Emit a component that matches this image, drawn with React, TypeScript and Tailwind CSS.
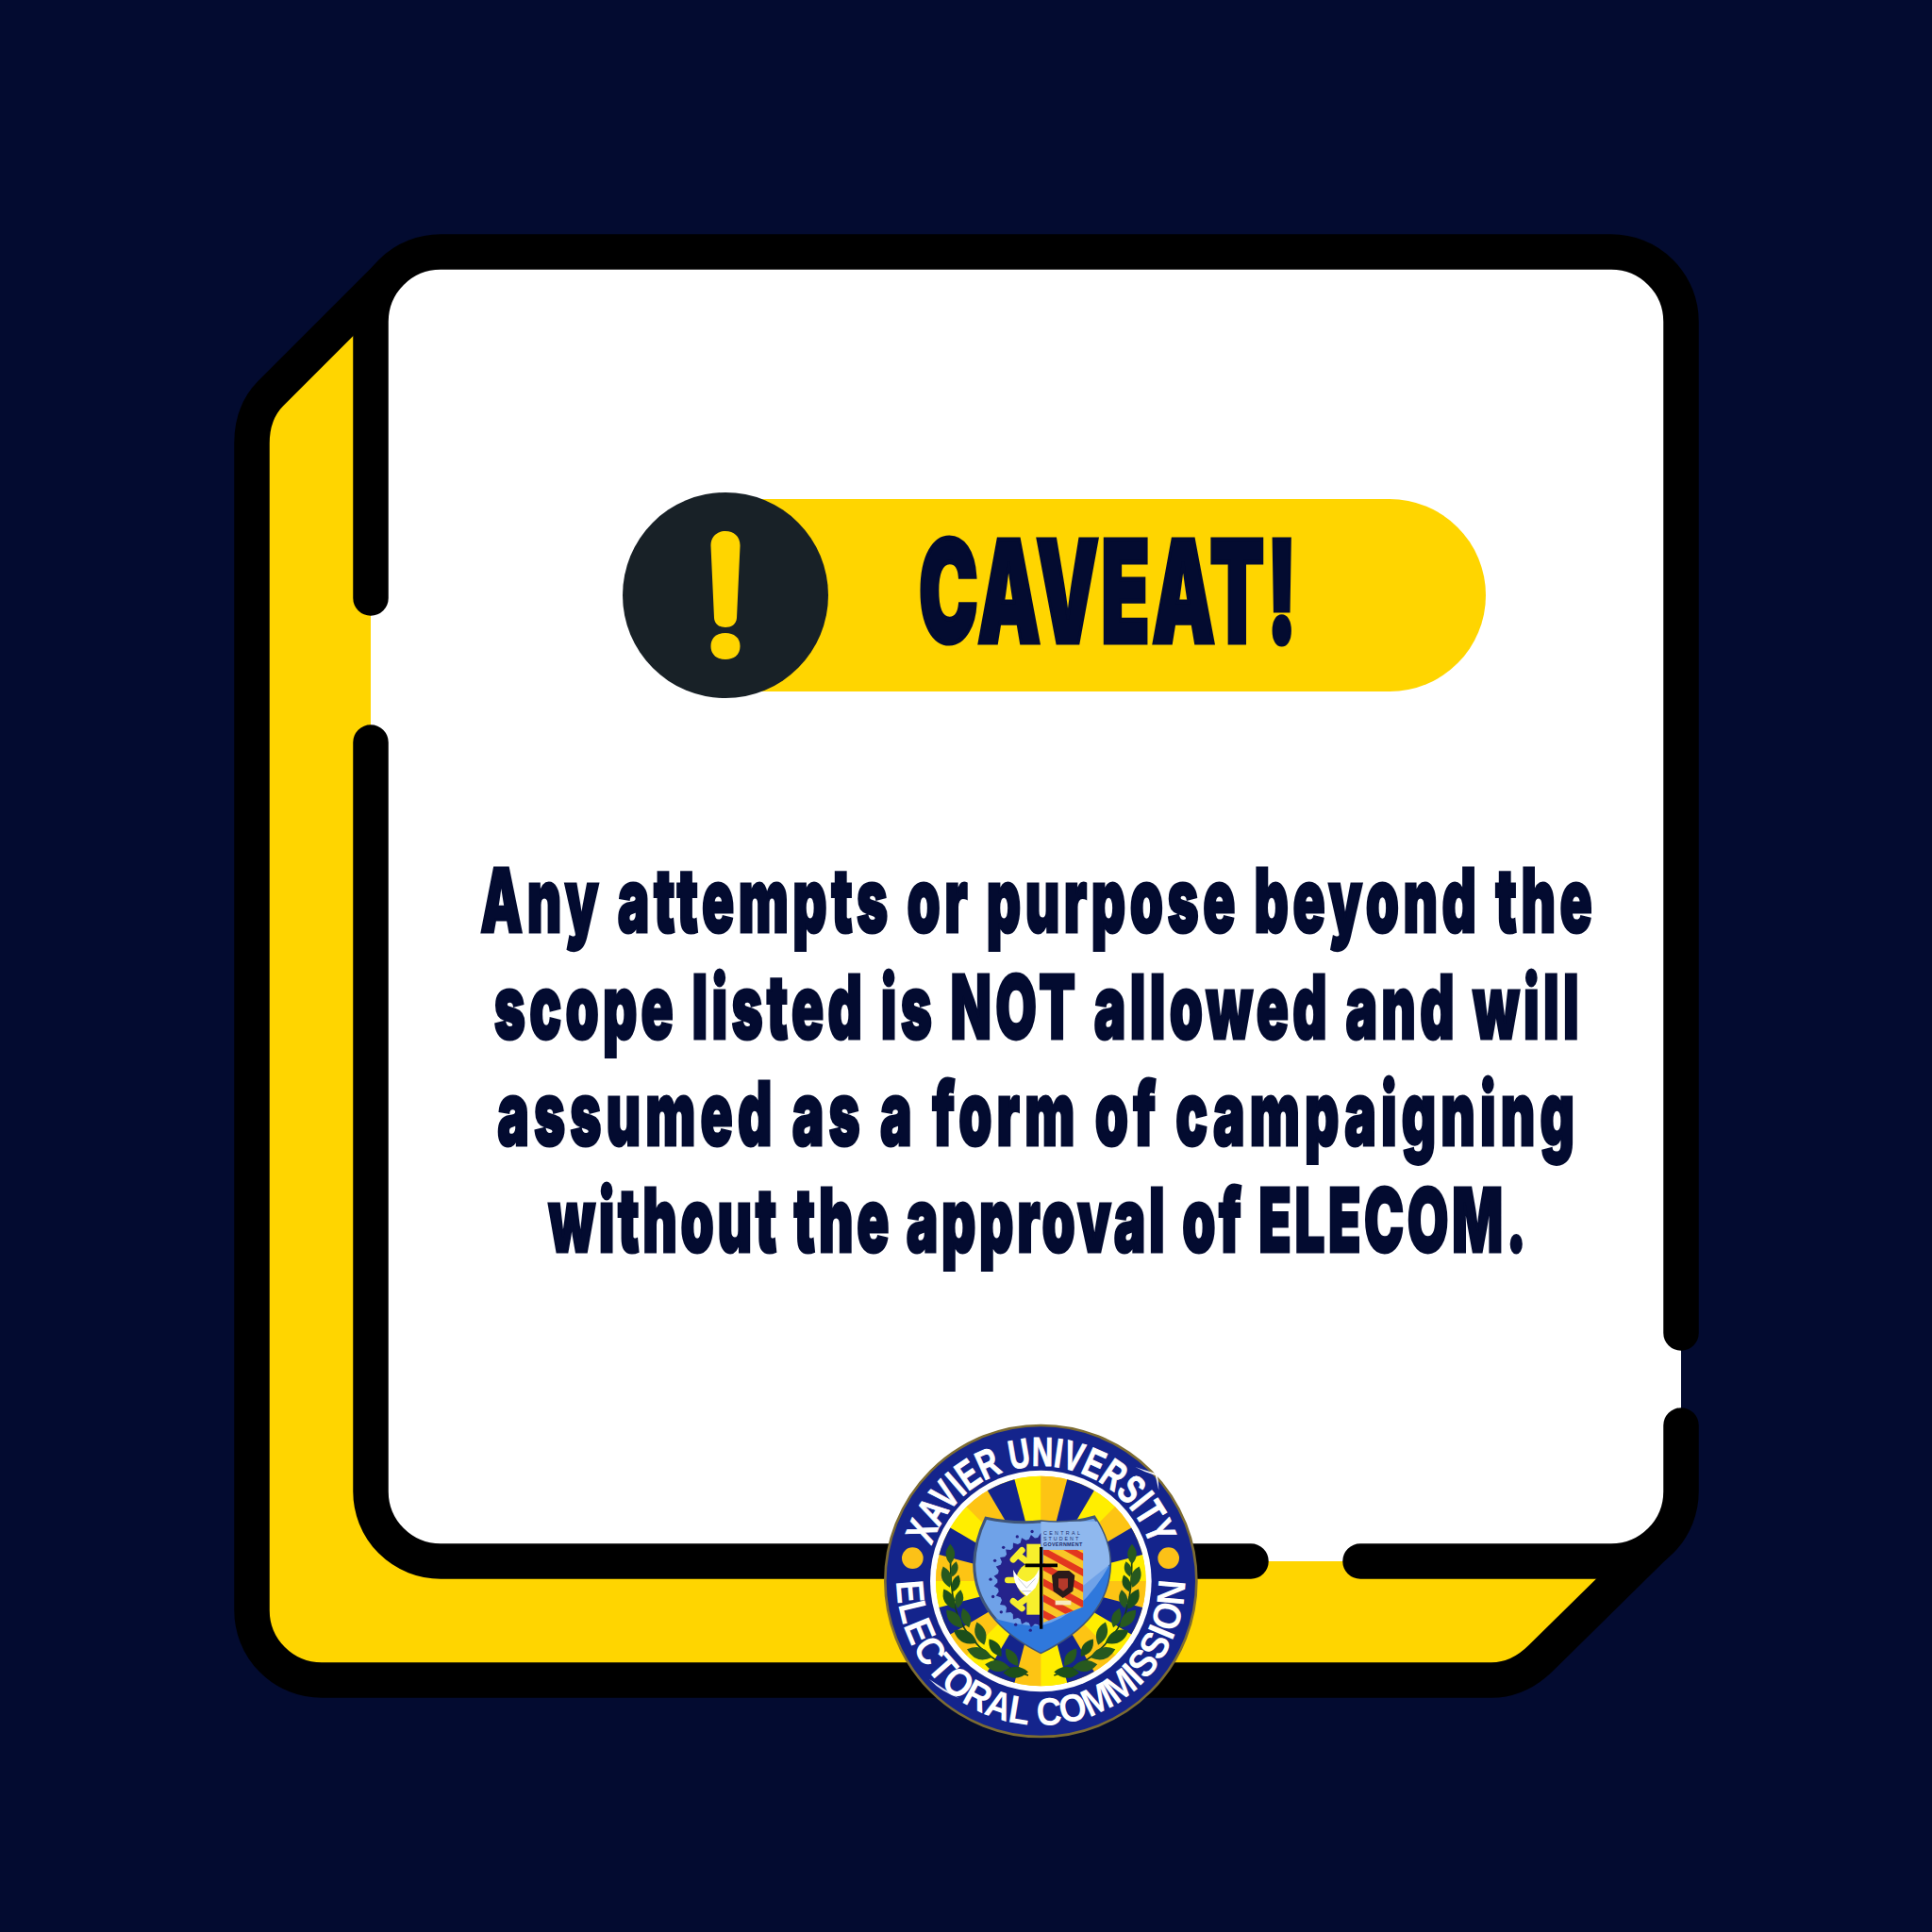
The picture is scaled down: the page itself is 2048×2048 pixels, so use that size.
const YELLOW = '#ffd500'
const SHIELD = 'M375 358Q470 378 550 368Q640 378 720 354Q770 430 770 505Q765 680 550 785Q340 680 338 505Q340 430 375 358Z'

function polar(r: number, deg: number) {
  const a = ((deg - 90) * Math.PI) / 180
  return [550 + r * Math.cos(a), 558 + r * Math.sin(a)]
}

function wedge(r: number, from: number, to: number) {
  const [x1, y1] = polar(r, from)
  const [x2, y2] = polar(r, to)
  return `M550 558L${x1} ${y1}A${r} ${r} 0 0 1 ${x2} ${y2}Z`
}

// left half of the gear, teeth every 12deg
function gear() {
  let d = 'M550 405'
  for (let a = -4; a >= -176; a -= 4) {
    const r = Math.round(a / 4) % 3 === 0 ? 150 : 138
    const [x, y] = polar(r, a)
    d += `L${x} ${y}`
  }
  return d + 'L550 705Z'
}

// [x, y, half length, rotation]
const leaves: number[][] = [
  [470, 848, 40, -2], [412, 828, 40, 8], [355, 788, 42, 18], [310, 735, 42, 28], [275, 678, 38, 48],
  [458, 800, 34, 55], [405, 770, 34, 55], [358, 725, 38, 72], [312, 675, 32, 72],
  [258, 615, 36, 62], [290, 615, 30, 100], [250, 545, 35, 72], [280, 565, 28, 108],
  [275, 520, 25, 105], [262, 472, 32, 90],
]

function Laurel({ flip }: { flip?: boolean }) {
  return (
    <g transform={flip ? 'translate(1102 0) scale(-1 1)' : undefined}>
      <path d="M510 858Q360 810 290 680Q255 590 265 450" fill="none" stroke="#173f14" strokeWidth="5" />
      {leaves.map(([x, y, l, r], i) => (
        <path
          key={i}
          d={`M${-l} 0Q0 ${-l * 0.9} ${l} 0Q0 ${l * 0.9} ${-l} 0Z`}
          transform={`translate(${x} ${y}) rotate(${r})`}
          fill={i % 3 === 0 ? '#1c4f1a' : '#27591f'}
        />
      ))}
    </g>
  )
}

function Seal() {
  const rays = [22.5, 67.5, 112.5, 157.5, 202.5, 247.5, 292.5, 337.5]
  const halves = [-22.5, 22.5, 67.5, 112.5, 157.5, 202.5, 247.5, 292.5]
  const gearDots = [-168, -150, -128, -108, -88, -66, -48, -28, -10]
  return (
    <svg viewBox="0 0 1080 1080" className="w-[360px] h-[360px]">
      <defs>
        <path id="seal-top" d={`M${polar(366, -72).join(' ')}A366 366 0 0 1 ${polar(366, 72).join(' ')}`} />
        <path id="seal-bottom" d={`M${polar(459, -90).join(' ')}A459 459 0 0 0 ${polar(459, 90).join(' ')}`} />
        <clipPath id="seal-panel">
          <path d="M558 458H685V640L558 690Z" />
        </clipPath>
        <clipPath id="seal-shield">
          <path d={SHIELD} />
        </clipPath>
      </defs>
      <circle cx="550" cy="558" r="495" fill="#14248c" stroke="#7d6c32" strokeWidth="8" />
      <circle cx="550" cy="558" r="352" fill="#ffffff" />
      <circle cx="550" cy="558" r="334" fill={YELLOW} />
      {halves.map((a) => (
        <g key={a}>
          <path d={wedge(334, a, a + 22.5)} fill="#ffee00" />
          <path d={wedge(334, a + 22.5, a + 45)} fill="#fdc414" />
        </g>
      ))}
      {rays.map((a) => (
        <path key={a} d={wedge(334, a - 8, a + 8)} fill="#14248c" />
      ))}
      <text fontFamily="'Liberation Sans', sans-serif" fontWeight="700" fontSize="130" fill="#ffffff" stroke="#ffffff" strokeWidth="3">
        <textPath href="#seal-top" textLength="920" lengthAdjust="spacingAndGlyphs">
          XAVIER UNIVERSITY
        </textPath>
      </text>
      <text fontFamily="'Liberation Sans', sans-serif" fontWeight="700" fontSize="124" fill="#ffffff">
        <textPath href="#seal-bottom" textLength="1442" lengthAdjust="spacingAndGlyphs">
          ELECTORAL COMMISSION
        </textPath>
      </text>
      <circle cx="142" cy="485" r="34" fill="#fcc117" />
      <circle cx="956" cy="485" r="34" fill="#fcc117" />

      <Laurel />
      <Laurel flip />

      <path d={SHIELD} fill="#6fa2e8" stroke="#40567a" strokeWidth="9" />
      <g clipPath="url(#seal-shield)">
        <path d="M550 368H775V500L550 680Z" fill="#8fb8ee" />
        <path d="M370 665Q460 700 550 700Q680 670 772 500V800H330Z" fill="#2f78dc" />
        <path d={gear()} fill="#25238c" />
        {gearDots.map((a) => {
          const [x, y] = polar(160, a)
          return <circle key={a} cx={x} cy={y} r="5" fill="#25238c" />
        })}
        <rect x="505" y="440" width="44" height="225" fill="#f7ef2c" />
        <circle cx="530" cy="555" r="58" fill="#f7ef2c" />
        <path d="M510 500L478 475M462 490L490 460M505 555H445M510 610L478 632M462 622L490 645" stroke="#f7ef2c" strokeWidth="20" strokeLinecap="round" />
        <path d="M462 522Q480 555 505 560Q530 555 545 518Q548 570 522 590L505 606L488 590Q462 570 462 522Z" fill="#ffffff" />
        <path d="M478 550L505 580L532 550M490 590H520" fill="none" stroke="#c5cbd2" strokeWidth="3" />
        <g clipPath="url(#seal-panel)">
          <rect x="558" y="458" width="130" height="240" fill="#f9c627" />
          {[0, 1, 2, 3, 4, 5, 6].map((i) => (
            <path key={i} d={`M540 ${402 + i * 50}L700 ${490 + i * 50}`} stroke="#e2371f" strokeWidth="21" />
          ))}
        </g>
        <path d="M585 540L605 525L640 525L658 540L652 590L620 612L590 590Z" fill="#2a1a1a" />
        <path d="M606 550H636V578L621 590L606 578Z" fill="#b5392a" />
        <rect x="596" y="620" width="50" height="14" fill="#f7e9c0" />
        <path d="M551 450V710" stroke="#000000" strokeWidth="10" />
        <path d="M500 508H603" stroke="#000000" strokeWidth="11" />
        <text x="558" y="410" fontFamily="'Liberation Sans', sans-serif" fontSize="16" letterSpacing="7" fill="#1d2f6f">
          CENTRAL
        </text>
        <text x="558" y="428" fontFamily="'Liberation Sans', sans-serif" fontSize="16" letterSpacing="6" fill="#1d2f6f">
          STUDENT
        </text>
        <text x="558" y="447" fontFamily="'Liberation Sans', sans-serif" fontWeight="700" fontSize="16" letterSpacing="1" fill="#1d2f6f">
          GOVERNMENT
        </text>
      </g>

      <path d="M850 195Q905 215 985 232Q915 232 850 195Z" fill="#ffffff" opacity="0.9" />
      <path d="M905 175Q912 215 925 270Q925 215 905 175Z" fill="#ffffff" opacity="0.9" />
      <path d="M195 870Q240 900 290 930Q235 912 195 870Z" fill="#ffffff" opacity="0.85" />
    </svg>
  )
}

function Frame() {
  return (
    <svg viewBox="0 0 2048 2048" className="absolute inset-0 w-[2048px] h-[2048px]">
      <path
        d="M415 289L287 417Q267 437 267 470V1707A74 74 0 0 0 341 1781H1581Q1610 1781 1634 1757L1760 1633"
        fill={YELLOW}
        stroke="#000000"
        strokeWidth="37.500"
      />
      <path d="M393 341A74 74 0 0 1 467 267H1708A74 74 0 0 1 1782 341V1581A74 74 0 0 1 1708 1655H467A74 74 0 0 1 393 1581Z" fill="#ffffff" />
      <path
        d="M393 634V341A74 74 0 0 1 467 267H1708A74 74 0 0 1 1782 341V1413M1782 1511V1581A74 74 0 0 1 1708 1655H1442M1326 1655H467A74 74 0 0 1 393 1581V787"
        fill="none"
        stroke="#000000"
        strokeWidth="37.500"
        strokeLinecap="round"
      />
    </svg>
  )
}

const lines = [
  { text: 'Any attempts or purpose beyond the', spacing: 'tracking-[7.5px]' },
  { text: 'scope listed is NOT allowed and will', spacing: 'tracking-[7.1px]' },
  { text: 'assumed as a form of campaigning', spacing: 'tracking-[8.5px]' },
  { text: 'without the approval of ELECOM.', spacing: 'tracking-[6px]' },
]

export default function App() {
  return (
    <div className="relative w-[2048px] h-[2048px] overflow-hidden bg-[#030b30] font-['Inter',sans-serif]">
      <Frame />

      <div className="relative flex flex-col pt-[522px] pl-[660px]">
        <div className="flex items-center h-[218px]">
          <div className="relative z-10 shrink-0 flex items-center justify-center w-[218px] h-[218px] rounded-full bg-[#182127]">
            <svg viewBox="0 0 32 136" className="w-[32px] h-[136px]">
              <path d="M16 0C25 0 32 6 31.500 16L28 92C27.500 99 22 102 16 102C10 102 4.500 99 4 92L0.500 16C0 6 7 0 16 0Z" fill={YELLOW} />
              <path d="M16 108C25 108 31.500 113 31.500 122C31.500 131 25 136 16 136C7 136 0.500 131 0.500 122C0.500 113 7 108 16 108Z" fill={YELLOW} />
            </svg>
          </div>
          <div className="-ml-[109px] w-[806px] h-[204px] rounded-r-full bg-[#ffd500] pl-[205px] pb-[8px] flex items-center">
            <span className="origin-left scale-x-[0.56] whitespace-nowrap text-[150px] leading-none font-black tracking-[4.3px] text-[#030b30] [-webkit-text-stroke:5px_#030b30]">
              CAVEAT!
            </span>
          </div>
        </div>
      </div>

      <div className="relative mt-[158px] ml-[417px] w-[1368px] flex flex-col items-center font-black text-[94px] leading-[113px] text-[#030b30]">
        {lines.map((line) => (
          <div key={line.text} className={`scale-x-[0.6] whitespace-nowrap [-webkit-text-stroke:3px_#030b30] ${line.spacing}`}>
            {line.text}
          </div>
        ))}
      </div>

      <div className="absolute left-[920px] top-[1490px]">
        <Seal />
      </div>
    </div>
  )
}
